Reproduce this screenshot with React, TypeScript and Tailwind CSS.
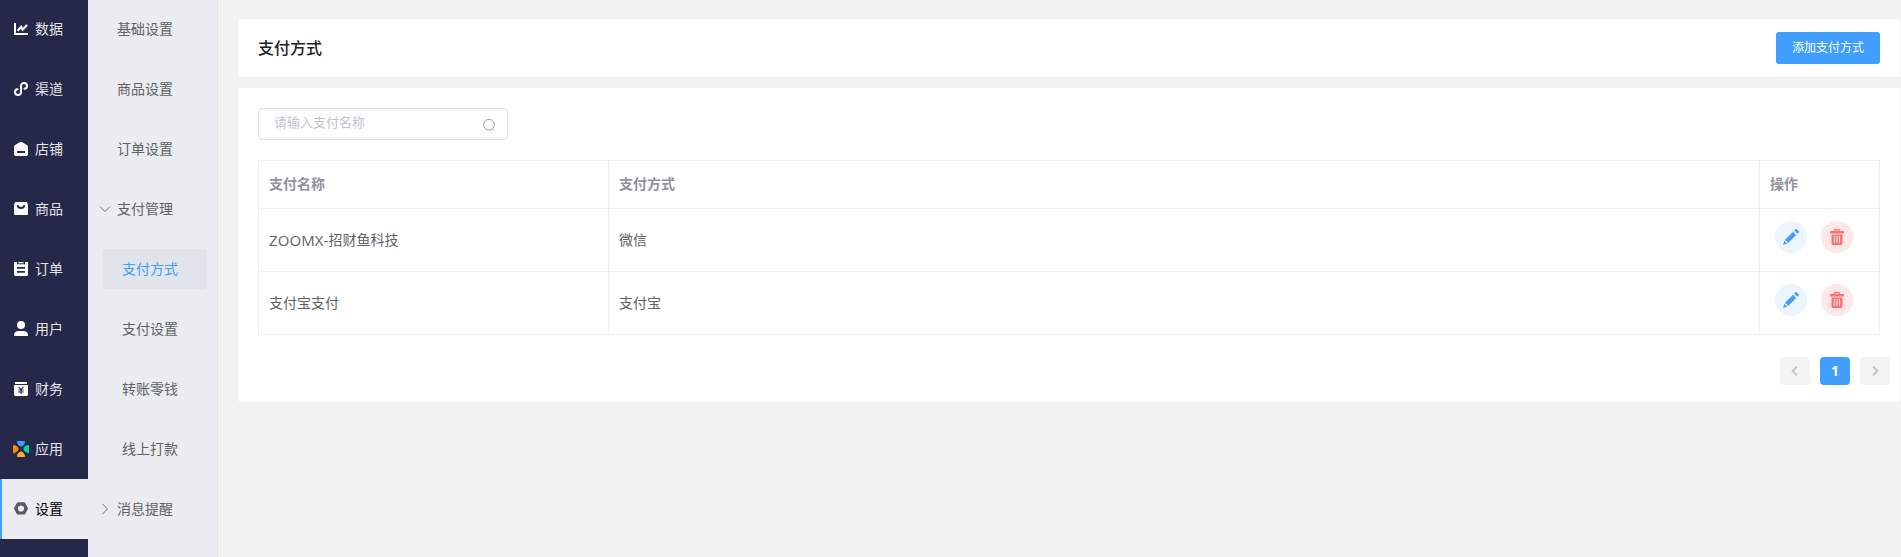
import type { ReactNode } from "react";

const svg = "block h-4 w-4 shrink-0";

const ChartIcon = () => (
  <svg className={svg} viewBox="0 0 16 16" fill="none" stroke="#fff">
    <path d="M2 2v11h13" strokeWidth="2" />
    <path d="M4.500 9.800l3.700-3.900 1.400 2.800L14 4" strokeWidth="2.200" />
  </svg>
);
const ChannelIcon = () => (
  <svg className={svg} viewBox="0 0 16 16" fill="none" stroke="#fff" strokeWidth="2" strokeLinecap="round">
    <path d="M4.600 8.200C3 8.300 2 9.400 2 11c0 1.700 1.200 3 2.900 3C6.700 14 8 12.800 8 11V5c0-1.800 1.300-3 3-3s3 1.300 3 3c0 1.600-1 2.700-2.600 2.800" />
  </svg>
);
const ShopIcon = () => (
  <svg className={svg} viewBox="0 0 16 16">
    <path d="M6.600 1.300L2.200 3.900C1.400 4.400 1 5 1 6v7.300c0 1 .7 1.700 1.700 1.700h10.600c1 0 1.700-.7 1.700-1.700V6c0-1-.4-1.600-1.200-2.100L9.400 1.300a2.800 2.800 0 0 0-2.800 0z" fill="#fff" />
    <path d="M4 10h8v2H4z" fill="#262849" />
  </svg>
);
const GoodsIcon = () => (
  <svg className={svg} viewBox="0 0 16 16">
    <path d="M3 1h10c.7 0 1.200.3 1.400 1l.6 2.500v8c0 1-.5 1.500-1.500 1.500h-11C1.500 14 1 13.500 1 12.500v-8L1.600 2c.2-.7.700-1 1.400-1z" fill="#fff" />
    <path d="M4.500 4.200C5 6.200 6.300 7 8 7s3-.8 3.500-2.800" fill="none" stroke="#262849" strokeWidth="1.900" />
  </svg>
);
const OrderIcon = () => (
  <svg className={svg} viewBox="0 0 16 16">
    <path d="M1 1h14v12.500c0 .9-.6 1.500-1.500 1.500h-11C1.600 15 1 14.400 1 13.500z" fill="#fff" />
    <path d="M4 0h1.500v2.200h5V0H12v3.300H4z" fill="#262849" />
    <path d="M6 1h4v1.200H6z" fill="#fff" />
    <path d="M4 6.800h8M4 10.800h8" stroke="#262849" strokeWidth="1.800" />
  </svg>
);
const UserIcon = () => (
  <svg className={svg} viewBox="0 0 16 16" fill="#fff">
    <circle cx="8" cy="4" r="4" />
    <path d="M1 15v-1c0-2.400 2-4 4.600-4h4.800c2.600 0 4.600 1.600 4.600 4v1z" />
  </svg>
);
const FinanceIcon = () => (
  <svg className={svg} viewBox="0 0 16 16">
    <path d="M2 1h12v2H2zM1 4h14v9.500c0 .9-.6 1.500-1.500 1.500h-11C1.600 15 1 14.400 1 13.500z" fill="#fff" />
    <path d="M5.500 5.800L8 8.500l2.500-2.700M8 8.500V13M5.300 9h5.400M5.300 11h5.400" fill="none" stroke="#262849" strokeWidth="1.100" />
  </svg>
);
const AppsIcon = () => (
  <svg className={svg} viewBox="0 0 16 16">
    <path d="M4.800 0h6.400c.9 0 1.200.8.800 1.500C11.200 3.500 9.800 5.600 8 5.600S4.800 3.500 4 1.500C3.700.8 4 0 4.800 0z" fill="#409eff" />
    <path d="M4.800 16h6.400c.9 0 1.200-.8.800-1.500-.8-2-2.200-4.100-4-4.100s-3.200 2.100-4 4.100c-.3.700 0 1.500.8 1.500z" fill="#ffae2c" />
    <path d="M0 4.800v6.400c0 .9.800 1.200 1.500.8 2-.8 4.100-2.200 4.100-4S3.500 4.800 1.500 4C.8 3.700 0 4 0 4.800z" fill="#ff8a00" />
    <path d="M16 4.800v6.400c0 .9-.8 1.200-1.500.8-2-.8-4.100-2.200-4.100-4s2.100-3.200 4.100-4c.7-.3 1.500 0 1.500.8z" fill="#00d8a4" />
  </svg>
);
const SettingsIcon = () => (
  <svg className={svg} viewBox="0 0 16 16">
    <path fillRule="evenodd" d="M5 1.200h6c.5 0 .9.200 1.200.7l2.600 4.900c.2.400.2.900 0 1.300l-2.600 4.800c-.3.500-.7.700-1.200.7H5c-.5 0-.9-.2-1.200-.7L1.200 8.100c-.2-.4-.2-.9 0-1.300l2.600-4.900c.3-.5.7-.7 1.200-.7zM8 4.400a3.100 3.100 0 1 0 0 6.200 3.100 3.100 0 0 0 0-6.200z" fill="#545c68" />
  </svg>
);

const nav: { label: string; icon: ReactNode }[] = [
  { label: "数据", icon: <ChartIcon /> },
  { label: "渠道", icon: <ChannelIcon /> },
  { label: "店铺", icon: <ShopIcon /> },
  { label: "商品", icon: <GoodsIcon /> },
  { label: "订单", icon: <OrderIcon /> },
  { label: "用户", icon: <UserIcon /> },
  { label: "财务", icon: <FinanceIcon /> },
  { label: "应用", icon: <AppsIcon /> },
  { label: "设置", icon: <SettingsIcon /> },
];

type SubItem = { label: string; open?: boolean; group?: boolean; child?: boolean; active?: boolean };
const subNav: SubItem[] = [
  { label: "基础设置" },
  { label: "商品设置" },
  { label: "订单设置" },
  { label: "支付管理", group: true, open: true },
  { label: "支付方式", child: true, active: true },
  { label: "支付设置", child: true },
  { label: "转账零钱", child: true },
  { label: "线上打款", child: true },
  { label: "消息提醒", group: true },
];

const Chevron = ({ open }: { open?: boolean }) => (
  <svg className="block h-3 w-3" viewBox="0 0 12 12" fill="none" stroke="#6b6f78" strokeWidth="1">
    {open ? <path d="M1 3.500l5 5 5-5" /> : <path d="M3.500 1l5 5-5 5" />}
  </svg>
);

function SubRow({ item }: { item: SubItem }) {
  if (item.child) {
    return (
      <div className="flex h-[60px] items-center pl-[15px]">
        <div
          className={
            item.active
              ? "flex h-10 w-[104px] items-center rounded bg-[#e1e4eb] pl-[19px] text-[#409eff]"
              : "flex h-10 w-[104px] items-center pl-[19px]"
          }
        >
          {item.label}
        </div>
      </div>
    );
  }
  return (
    <div className="flex h-[60px] items-center">
      <span className="flex w-[29px] justify-center pl-[5px]">{item.group && <Chevron open={item.open} />}</span>
      <span>{item.label}</span>
    </div>
  );
}

const EditIcon = () => (
  <svg className="block h-4 w-4" viewBox="0 0 16 16" fill="#409eff">
    <path d="M12.400.4c.5-.5 1-.5 1.500 0l1.700 1.700c.5.500.5 1 0 1.500l-1.200 1.200-3.200-3.200zM10 2.800l3.200 3.200-8 8L2 10.800zM1.400 11.800l2.800 2.800L0 16z" />
  </svg>
);
const TrashIcon = () => (
  <svg className="block h-4 w-4" viewBox="0 0 16 16">
    <path d="M5 2V1.200C5 .5 5.500 0 6.200 0h3.600c.7 0 1.200.5 1.200 1.200V2h3.300c.4 0 .7.300.7.700v1.500c0 .2-.2.400-.4.400H1.400c-.2 0-.4-.2-.4-.4V2.700c0-.4.300-.7.700-.7zM6.300 1.200V2h3.400v-.8z" fill="#ff7070" />
    <path d="M2.500 5.500h11v8.700c0 1-.8 1.800-1.800 1.800H4.300c-1 0-1.800-.8-1.800-1.800z" fill="#ff7070" />
    <path d="M5.500 6.800v7M8 6.800v7M10.500 6.800v7" stroke="#fde7e7" strokeWidth="1.100" />
  </svg>
);

const rows = [
  { name: "招财鱼科技", prefix: "ZOOMX-", method: "微信" },
  { name: "支付宝支付", prefix: "", method: "支付宝" },
];

const cols = "grid grid-cols-[350px_1151px_120px]";
const cell = "flex items-center border-r border-b border-[#ebeef5] pl-2.5";

export default function App() {
  return (
    <div className="flex h-[557px] w-full overflow-hidden bg-[#f2f2f2] text-sm text-[#606266] [font-family:'Open_Sans','Noto_Sans_CJK_SC',sans-serif]">
      <aside className="h-full w-[88px] shrink-0 bg-[#262849] text-[#e3e4e8]">
        <nav className="-mt-px">
          {nav.map((n) => (
            <div
              key={n.label}
              className={
                n.label === "设置"
                  ? "flex h-[60px] items-center gap-1.5 border-l-2 border-[#409eff] bg-[#ebecf1] pl-[11px] text-black"
                  : "flex h-[60px] items-center gap-1.5 pl-[13px]"
              }
            >
              {n.icon}
              <span>{n.label}</span>
            </div>
          ))}
        </nav>
      </aside>

      <aside className="h-full w-[130px] shrink-0 border-r border-[#e2e4e8] bg-[#ebecf1]">
        <nav className="-mt-px">
          {subNav.map((s) => (
            <SubRow key={s.label} item={s} />
          ))}
        </nav>
      </aside>

      <main className="min-w-0 flex-1 pt-[19px] pr-px pl-5">
        <header className="flex h-[58px] items-center justify-between rounded-t bg-white px-5 shadow-[0_1px_0_#ebebeb]">
          <h1 className="text-base font-medium text-[#1f2024]">支付方式</h1>
          <button className="h-8 w-[104px] rounded-[3px] bg-[#409eff] text-xs text-white">添加支付方式</button>
        </header>

        <section className="mt-[11px] h-[314px] rounded-b bg-white pt-5 pl-5">
          <div className="flex h-8 w-[250px] items-center justify-between rounded border border-[#dcdfe6] pr-[11px] pl-[15px]">
            <span className="pb-1 text-[13px] text-[#c0c4cc]">请输入支付名称</span>
            <svg className="mt-0.5 block h-3.5 w-3.5" viewBox="0 0 14 14" fill="none" stroke="#9a9ea6">
              <circle cx="7" cy="6.700" r="5.300" />
              <path d="M10.300 10.300l2.300 2.300" />
            </svg>
          </div>

          <div className="mt-5 w-[1622px] border-t border-l border-[#ebeef5]">
            <div className={cols + " h-12 font-bold text-[#909399]"}>
              <div className={cell + " pb-px"}>支付名称</div>
              <div className={cell + " pb-px"}>支付方式</div>
              <div className={cell + " pb-px"}>操作</div>
            </div>
            {rows.map((r) => (
              <div key={r.name} className={cols + " h-[63px]"}>
                <div className={cell}>
                  {r.prefix && <span className="text-[15px] leading-5 tracking-[0.1px]">{r.prefix}</span>}
                  {r.name}
                </div>
                <div className={cell}>{r.method}</div>
                <div className="flex items-start gap-3.5 border-r border-b border-[#ebeef5] pt-3 pl-[15px]">
                  <button className="flex h-8 w-8 items-center justify-center rounded-full bg-[#ecf5ff]">
                    <EditIcon />
                  </button>
                  <button className="flex h-8 w-8 items-center justify-center rounded-full bg-[#fde7e7]">
                    <TrashIcon />
                  </button>
                </div>
              </div>
            ))}
          </div>

          <div className="mt-[22px] flex justify-end gap-2.5 pr-2.5">
            <button className="flex h-7 w-[30px] items-center justify-center rounded-sm bg-[#f4f4f5]">
              <svg className="h-3 w-3" viewBox="0 0 12 12" fill="none" stroke="#c0c4cc" strokeWidth="1.800">
                <path d="M8 1.500L3.500 6 8 10.500" />
              </svg>
            </button>
            <button className="h-7 w-[30px] rounded-sm bg-[#409eff] text-sm font-bold text-white">1</button>
            <button className="flex h-7 w-[30px] items-center justify-center rounded-sm bg-[#f4f4f5]">
              <svg className="h-3 w-3" viewBox="0 0 12 12" fill="none" stroke="#c0c4cc" strokeWidth="1.800">
                <path d="M4 1.500L8.500 6 4 10.500" />
              </svg>
            </button>
          </div>
        </section>
      </main>
    </div>
  );
}
